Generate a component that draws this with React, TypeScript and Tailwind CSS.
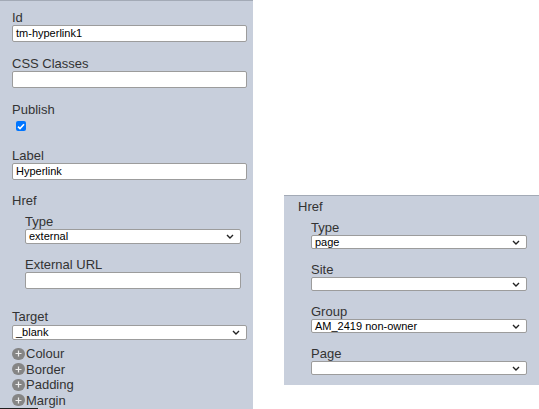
import React from 'react';

const Chevron: React.FC = () => (
  <svg width="8" height="5" viewBox="0 0 8 5" className="shrink-0">
    <path d="M1 1 L4 4 L7 1" fill="none" stroke="#222" strokeWidth="1.4" />
  </svg>
);

const TextBox: React.FC<{ value?: string }> = ({ value }) => (
  <div className="h-[17px] bg-white border border-[#9c9c9c] rounded-[2px] pl-[3px] text-[11px] leading-[15px] text-black">
    {value}
  </div>
);

const SelectBox: React.FC<{ value?: string; h?: string }> = ({ value, h = 'h-[15px]' }) => (
  <div className={`${h} flex items-center justify-between bg-white border border-[#9c9c9c] rounded-[2px] pl-[3px] pr-[6px] text-[11px] text-black`}>
    <span className="leading-[13px]">{value}</span>
    <Chevron />
  </div>
);

const Expander: React.FC<{ label: string }> = ({ label }) => (
  <div className="flex items-center h-[15.5px] leading-[15.5px]">
    <span className="w-[13px] h-[12px] rounded-full bg-[#858585] flex items-center justify-center mr-px">
      <svg width="7" height="7" viewBox="0 0 7 7">
        <path d="M3.5 0.5 V6.5 M0.5 3.5 H6.5" stroke="#eeeeee" strokeWidth="1.2" />
      </svg>
    </span>
    <span>{label}</span>
  </div>
);

const App: React.FC = () => {
  return (
    <div className="flex items-start w-[539px] h-[409px] bg-white overflow-hidden text-[13px] text-[#333]" style={{ fontFamily: "'Liberation Sans', Arial, sans-serif" }}>
      {/* Left: full property panel */}
      <div className="w-[253px] h-[409px] shrink-0 overflow-hidden flex flex-col bg-[#c8cfdc] border-t border-[#a3aab6] pl-3 pr-[6px] pt-[10px]">
        <div className="leading-[14px]">Id</div>
        <TextBox value="tm-hyperlink1" />

        <div className="leading-[14px] mt-[15px]">CSS Classes</div>
        <TextBox />

        <div className="leading-[14px] mt-[15px]">Publish</div>
        <div className="mt-[4px] ml-[4px] w-[10px] h-[10px] rounded-[2px] bg-[#0075ff] flex items-center justify-center">
          <svg width="8" height="7" viewBox="0 0 8 7">
            <path d="M1 3.6 L3 5.6 L7 1.2" fill="none" stroke="#fff" strokeWidth="1.6" />
          </svg>
        </div>

        <div className="leading-[14px] mt-[18px]">Label</div>
        <TextBox value="Hyperlink" />

        <div className="leading-[14px] mt-[14px]">Href</div>
        <div className="ml-[13px] mr-[6px] flex flex-col">
          <div className="leading-[14px] mt-[7px]">Type</div>
          <SelectBox value="external" />
          <div className="leading-[14px] mt-[14px]">External URL</div>
          <TextBox />
        </div>

        <div className="leading-[14px] mt-[21px]">Target</div>
        <div className="mt-px">
          <SelectBox value="_blank" />
        </div>

        <div className="mt-[6px] flex flex-col">
          <Expander label="Colour" />
          <Expander label="Border" />
          <Expander label="Padding" />
          <Expander label="Margin" />
        </div>
        <div className="-ml-3 h-px w-[38px] bg-[#1f1f1f]" />
      </div>

      {/* Right: href panel with page type */}
      <div className="ml-[31px] mt-[195px] flex-1 h-[190px] flex flex-col bg-[#c8cfdc] border-t border-[#a3aab6] pl-[14px] pr-[12px] pt-[4px]">
        <div className="leading-[14px]">Href</div>
        <div className="ml-[13px] flex flex-col">
          <div className="leading-[14px] mt-[7px]">Type</div>
          <SelectBox value="page" h="h-[14px]" />
          <div className="leading-[14px] mt-[14px]">Site</div>
          <SelectBox h="h-[14px]" />
          <div className="leading-[14px] mt-[14px]">Group</div>
          <SelectBox value="AM_2419 non-owner" h="h-[14px]" />
          <div className="leading-[14px] mt-[14px]">Page</div>
          <SelectBox h="h-[14px]" />
        </div>
      </div>
    </div>
  );
};

export default App;
